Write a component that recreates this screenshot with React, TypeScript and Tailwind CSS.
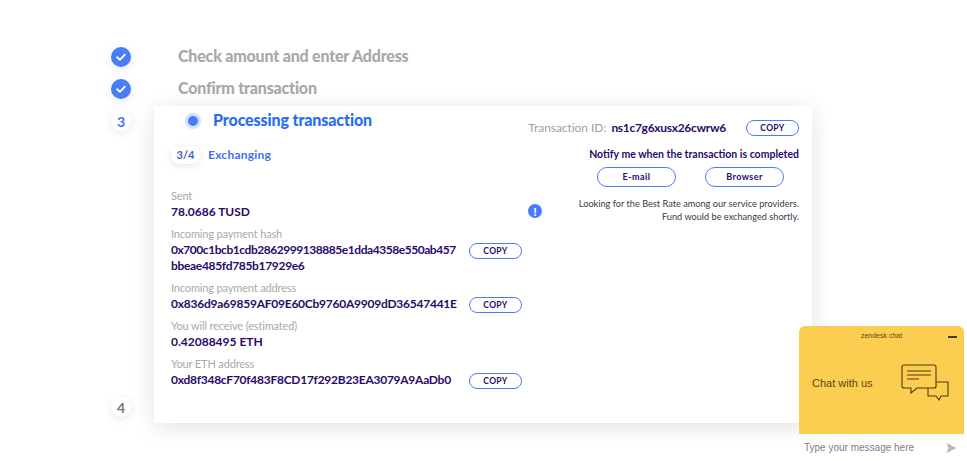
import React from 'react'

const navy = 'text-[#2a0a6b]'

function CopyButton() {
  return (
    <button
      type="button"
      className={`w-[53px] h-[16px] shrink-0 rounded-full border border-[#4a7cf6] bg-white text-[8.5px] leading-none font-bold tracking-[0.04em] ${navy}`}
    >
      COPY
    </button>
  )
}

function CheckDot() {
  return (
    <div className="w-[20px] h-[20px] rounded-full bg-[#4a7cf6] flex items-center justify-center shadow-[0_2px_8px_rgba(74,124,246,0.18)]">
      <svg width="12" height="12" viewBox="0 0 12 12" fill="none">
        <path d="M2.2 6.3 L4.9 8.8 L9.8 3.6" stroke="white" strokeWidth="1.9" strokeLinecap="round" strokeLinejoin="round" />
      </svg>
    </div>
  )
}

function NumberDot({ n, active }: { n: number; active?: boolean }) {
  return (
    <div
      className={`w-[20px] h-[20px] rounded-full bg-white flex items-center justify-center text-[14px] font-bold shadow-[0_2px_10px_rgba(0,0,0,0.1)] ${active ? 'text-[#3f72f5]' : 'text-[#777777]'}`}
    >
      {n}
    </div>
  )
}

function Field({ label, children }: { label: string; children: React.ReactNode }) {
  return (
    <div>
      <div className="text-[11px] leading-[16px] tracking-[-0.15px] text-[#a9a9a9]">{label}</div>
      {children}
    </div>
  )
}

function Value({ children, className }: { children: React.ReactNode; className?: string }) {
  return <div className={`text-[12px] leading-[16px] font-bold whitespace-nowrap ${navy} ${className ?? ''}`}>{children}</div>
}

// value line with a copy button, the button sits 1px under the text centre
function CopyRow({ children, className }: { children: React.ReactNode; className?: string }) {
  return (
    <div className="flex items-center justify-between h-[16px]">
      <Value className={className}>{children}</Value>
      <div className="flex mt-[2px]"><CopyButton /></div>
    </div>
  )
}

function ChatWidget() {
  return (
    <div className="absolute right-[3px] bottom-0 w-[165px] h-[135px] rounded-t-[6px] overflow-hidden flex flex-col font-['Liberation_Sans',sans-serif]">
      <div className="relative h-[108px] bg-[#fbcd50] text-[#5e4a16]">
        <div className="text-center text-[7px] leading-[8px] pt-[6px]">zendesk chat</div>
        <div className="absolute right-[7px] top-[10px] w-[9px] h-[2px] bg-[#4a3a10]" />
        <div className="absolute left-[13px] top-[51px] text-[11px] leading-[13px]">Chat with us</div>
        <svg className="absolute left-[102px] top-[38px]" width="50" height="40" viewBox="0 0 50 40" fill="none" stroke="#4f3d10" strokeWidth="1.1">
          <path d="M27 18 H47 V32 H40 L38 36 L35 32 H27 Z" fill="#fbcd50" />
          <path d="M27 18 H36 V24 H27 Z" fill="#e0b044" stroke="none" />
          <path d="M3 1 H33 Q35 1 35 3 V22 Q35 24 33 24 H16 L10 29 L10 24 H3 Q1 24 1 22 V3 Q1 1 3 1 Z" fill="#fbcd50" />
          <path d="M6 7 H30 M6 11 H30 M6 15 H18" />
        </svg>
      </div>
      <div className="h-[27px] bg-white flex items-center justify-between pl-[5px] pr-[7px]">
        <span className="text-[10px] text-[#7a8089]">Type your message here</span>
        <svg width="11" height="10" viewBox="0 0 11 10" fill="#b4b9bf">
          <path d="M0.5 0 L10.5 5 L0.5 10 L2.5 5 Z" />
        </svg>
      </div>
    </div>
  )
}

export default function App() {
  return (
    <div className="relative w-full h-[461px] overflow-hidden bg-white font-['Lato',sans-serif]">
      <div className="grid grid-cols-[20px_658px] gap-x-[23px] pl-[111px] pt-[47px]">
        <div className="h-[32px]"><CheckDot /></div>
        <div className="h-[32px] pl-[24px] text-[16px] leading-[20px] font-black tracking-[-0.2px] text-[#a8a8a8] -mt-[1px]">Check amount and enter Address</div>
        <div className="h-[27px]"><CheckDot /></div>
        <div className="h-[27px] pl-[24px] text-[16px] leading-[20px] font-black tracking-[-0.2px] text-[#a8a8a8] -mt-[1px]">Confirm transaction</div>

        <div className="flex flex-col justify-between pt-[5px] pb-[6px]">
          <NumberDot n={3} active />
          <NumberDot n={4} />
        </div>

        <div className="h-[317px] bg-white shadow-[0_4px_22px_rgba(0,0,0,0.12)] flex justify-between pl-[17px] pr-[13px]">
          <div className="w-[351px]">
            <div className="flex items-center h-[28px] pl-[14px] gap-[12px]">
              <div className="w-[16px] h-[16px] rounded-full bg-[#4a7cf6] border-[3px] border-[#d3e0fd] mt-[2px]" />
              <div className="text-[16px] leading-[20px] font-black tracking-[-0.12px] text-[#2a6cf6] -mt-[1px]">Processing transaction</div>
            </div>
            <div className="flex items-center gap-[8px] mt-[12px]">
              <div className="w-[29px] h-[17px] rounded-full bg-white shadow-[0_2px_8px_rgba(0,0,0,0.1)] flex items-center justify-center text-[11px] font-bold text-[#3f5fd0]">
                3/4
              </div>
              <div className="text-[12px] font-bold tracking-[0.02em] text-[#3f72f5]">Exchanging</div>
            </div>

            <div className="flex flex-col gap-[6px] mt-[24px]">
              <Field label="Sent">
                <Value>78.0686 TUSD</Value>
              </Field>
              <Field label="Incoming payment hash">
                <CopyRow className="tracking-[-0.45px]">0x700c1bcb1cdb2862999138885e1dda4358e550ab457</CopyRow>
                <Value className="tracking-[-0.32px]">bbeae485fd785b17929e6</Value>
              </Field>
              <Field label="Incoming payment address">
                <CopyRow className="tracking-[-0.24px]">0x836d9a69859AF09E60Cb9760A9909dD36547441E</CopyRow>
              </Field>
              <Field label="You will receive (estimated)">
                <Value>0.42088495 ETH</Value>
              </Field>
              <Field label="Your ETH address">
                <CopyRow className="tracking-[-0.26px]">0xd8f348cF70f483F8CD17f292B23EA3079A9AaDb0</CopyRow>
              </Field>
            </div>
          </div>

          <div className="w-[271px] flex flex-col items-end pt-[13px]">
            <div className="flex items-center whitespace-nowrap">
              <span className="text-[12px] tracking-[-0.05px] text-[#a39e98]">Transaction ID:</span>
              <span className={`ml-[5px] text-[12px] tracking-[-0.3px] font-bold ${navy}`}>ns1c7g6xusx26cwrw6</span>
              <div className="flex ml-[20px]"><CopyButton /></div>
            </div>
            <div className={`mt-[10px] text-[10.5px] leading-[14px] font-bold whitespace-nowrap ${navy}`}>Notify me when the transaction is completed</div>
            <div className="flex gap-[29px] self-start ml-[69px] mt-[6px]">
              <button type="button" className={`w-[79px] h-[20px] rounded-full border border-[#4a7cf6] text-[9px] font-bold tracking-[0.05em] ${navy}`}>E-mail</button>
              <button type="button" className={`w-[79px] h-[20px] rounded-full border border-[#4a7cf6] text-[9px] font-bold tracking-[0.05em] ${navy}`}>Browser</button>
            </div>
            <div className="flex justify-between w-full mt-[10px]">
              <div className="w-[14px] h-[14px] mt-[7px] rounded-full bg-[#4a7cf6] flex items-center justify-center text-white text-[11px] leading-none font-black">!</div>
              <div className="text-right text-[9.2px] leading-[13px] text-[#3a3a4a]">
                <div>Looking for the Best Rate among our service providers.</div>
                <div>Fund would be exchanged shortly.</div>
              </div>
            </div>
          </div>
        </div>
      </div>
      <ChatWidget />
    </div>
  )
}
